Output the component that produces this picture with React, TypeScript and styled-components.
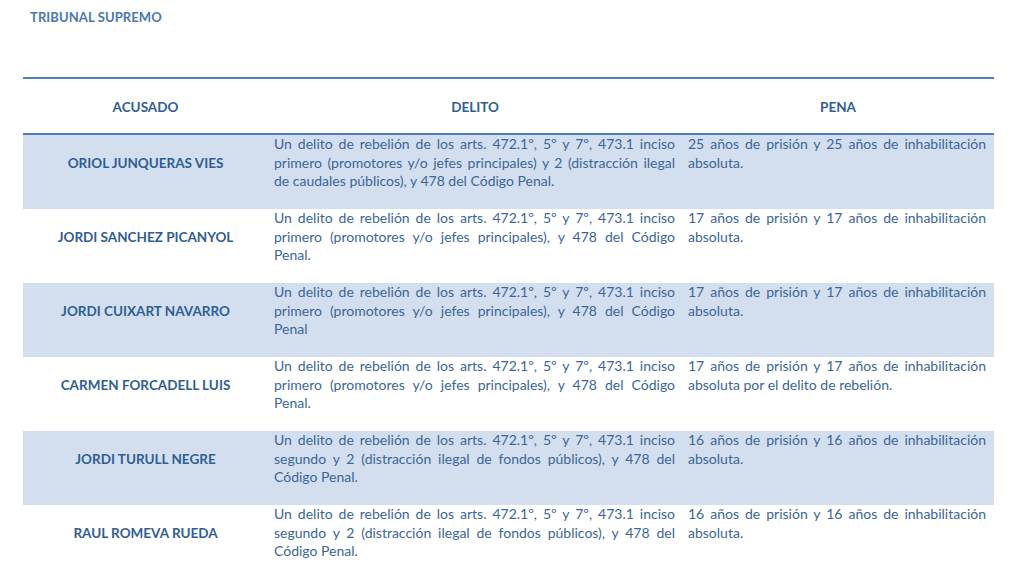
import React from "react";
import styled, { createGlobalStyle } from "styled-components";

const GlobalStyle = createGlobalStyle`
  html, body {
    margin: 0;
    padding: 0;
    background: #ffffff;
  }
  body {
    font-family: Lato, "Open Sans", "Liberation Sans", sans-serif;
    color: #3b6698;
  }
`;

interface Row {
  name: string;
  delito: string[];
  pena: string[];
}

const rows: Row[] = [
  {
    name: "ORIOL JUNQUERAS VIES",
    delito: [
      "Un delito de rebelión de los arts. 472.1º, 5º y 7º, 473.1 inciso",
      "primero (promotores y/o jefes principales) y 2 (distracción ilegal",
      "de caudales públicos), y 478 del Código Penal.",
    ],
    pena: ["25 años de prisión y 25 años de inhabilitación", "absoluta."],
  },
  {
    name: "JORDI SANCHEZ PICANYOL",
    delito: [
      "Un delito de rebelión de los arts. 472.1º, 5º y 7º, 473.1 inciso",
      "primero (promotores y/o jefes principales), y 478 del Código",
      "Penal.",
    ],
    pena: ["17 años de prisión y 17 años de inhabilitación", "absoluta."],
  },
  {
    name: "JORDI CUIXART NAVARRO",
    delito: [
      "Un delito de rebelión de los arts. 472.1º, 5º y 7º, 473.1 inciso",
      "primero (promotores y/o jefes principales), y 478 del Código",
      "Penal",
    ],
    pena: ["17 años de prisión y 17 años de inhabilitación", "absoluta."],
  },
  {
    name: "CARMEN FORCADELL LUIS",
    delito: [
      "Un delito de rebelión de los arts. 472.1º, 5º y 7º, 473.1 inciso",
      "primero (promotores y/o jefes principales), y 478 del Código",
      "Penal.",
    ],
    pena: [
      "17 años de prisión y 17 años de inhabilitación",
      "absoluta por el delito de rebelión.",
    ],
  },
  {
    name: "JORDI TURULL NEGRE",
    delito: [
      "Un delito de rebelión de los arts. 472.1º, 5º y 7º, 473.1 inciso",
      "segundo y 2 (distracción ilegal de fondos públicos), y 478 del",
      "Código Penal.",
    ],
    pena: ["16 años de prisión y 16 años de inhabilitación", "absoluta."],
  },
  {
    name: "RAUL ROMEVA RUEDA",
    delito: [
      "Un delito de rebelión de los arts. 472.1º, 5º y 7º, 473.1 inciso",
      "segundo y 2 (distracción ilegal de fondos públicos), y 478 del",
      "Código Penal.",
    ],
    pena: ["16 años de prisión y 16 años de inhabilitación", "absoluta."],
  },
];

function Paragraph({ lines }: { lines: string[] }) {
  return (
    <Para>
      {lines.map((l, i) => (
        <Line key={i} $justify={i < lines.length - 1}>
          {l}
        </Line>
      ))}
    </Para>
  );
}

export default function App() {
  return (
    <Page>
      <GlobalStyle />
      <Title>TRIBUNAL SUPREMO</Title>
      <Table>
        <HeaderRow>
          <HeadCell>ACUSADO</HeadCell>
          <HeadCell>DELITO</HeadCell>
          <HeadCell>PENA</HeadCell>
        </HeaderRow>
        {rows.map((r, i) => (
          <BodyRow key={r.name} $shaded={i % 2 === 0}>
            <NameCell>{r.name}</NameCell>
            <TextCell $right={7}>
              <Paragraph lines={r.delito} />
            </TextCell>
            <TextCell $right={8}>
              <Paragraph lines={r.pena} />
            </TextCell>
          </BodyRow>
        ))}
      </Table>
    </Page>
  );
}

const Page = styled.div`
  width: 1024px;
  height: 576px;
  overflow: hidden;
  padding-top: 9px;
  box-sizing: border-box;
`;

const Title = styled.div`
  padding-left: 30px;
  font-size: 13px;
  font-weight: 700;
  line-height: 16px;
  color: #4a78ad;
  letter-spacing: 0.1px;
`;

const Table = styled.div`
  margin: 52px 0 0 23px;
  width: 971px;
  border-top: 2px solid #4f7fbb;
`;

const columns = "245px 414px 312px";

const HeaderRow = styled.div`
  display: grid;
  grid-template-columns: ${columns};
  height: 53px;
  align-items: center;
  padding-top: 1px;
  border-bottom: 2px solid #4f7fbb;
`;

const HeadCell = styled.div`
  text-align: center;
  font-size: 13.5px;
  font-weight: 700;
  color: #2f5e93;
`;

const BodyRow = styled.div<{ $shaded: boolean }>`
  display: grid;
  grid-template-columns: ${columns};
  height: 74px;
  box-sizing: border-box;
  padding: 0 0 18px;
  background: ${(p) => (p.$shaded ? "#d3dfef" : "#ffffff")};
`;

const NameCell = styled.div`
  display: flex;
  align-items: center;
  justify-content: center;
  font-size: 13.5px;
  font-weight: 700;
  color: #2f5e93;
`;

const TextCell = styled.div<{ $right: number }>`
  padding: 0 ${(p) => p.$right}px 0 6px;
`;

const Para = styled.div`
  font-size: 14px;
  line-height: 18.5px;
  color: #3b6698;
`;

const Line = styled.div<{ $justify: boolean }>`
  white-space: nowrap;
  text-align: ${(p) => (p.$justify ? "justify" : "left")};
  text-align-last: ${(p) => (p.$justify ? "justify" : "left")};
`;
